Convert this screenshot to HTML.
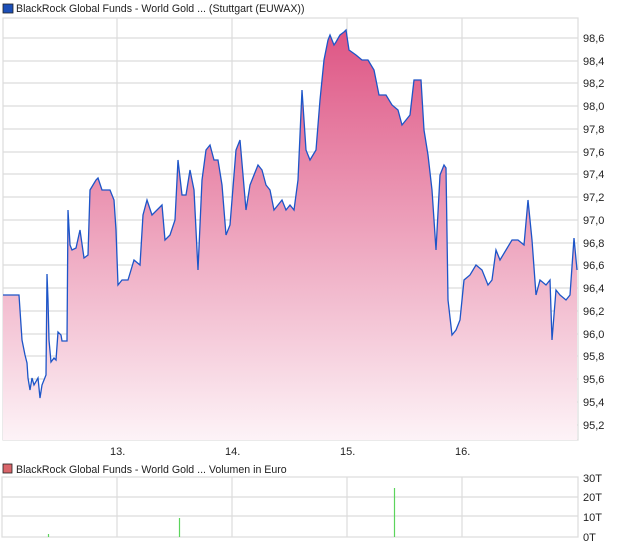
<!DOCTYPE html>
<html><head><meta charset="utf-8"><style>
html,body{margin:0;padding:0;background:#fff;}
body{width:620px;height:546px;overflow:hidden;font-family:"Liberation Sans",sans-serif;}
text{font-family:"Liberation Sans",sans-serif;font-size:11px;fill:#222;}
text.t{font-size:10.6px;}
</style></head><body>
<svg width="620" height="546" viewBox="0 0 620 546" xmlns="http://www.w3.org/2000/svg">
<defs>
<linearGradient id="g" x1="0" y1="30" x2="0" y2="440" gradientUnits="userSpaceOnUse">
<stop offset="0" stop-color="#de5584"/>
<stop offset="1" stop-color="#fdf3f7"/>
</linearGradient>
</defs>
<rect x="3" y="4" width="10" height="9" fill="#1c4fb8" stroke="#222" stroke-width="0.8"/>
<text class="t" x="16" y="12">BlackRock Global Funds - World Gold ... (Stuttgart (EUWAX))</text>
<g stroke="#dcdcdc" stroke-width="1.2" fill="none">
<rect x="3" y="18" width="575" height="422"/>
<line x1="117" y1="18" x2="117" y2="440"/><line x1="232" y1="18" x2="232" y2="440"/>
<line x1="347" y1="18" x2="347" y2="440"/><line x1="462" y1="18" x2="462" y2="440"/>
<line x1="3" y1="38" x2="578" y2="38"/><line x1="3" y1="61" x2="578" y2="61"/><line x1="3" y1="83" x2="578" y2="83"/><line x1="3" y1="106" x2="578" y2="106"/><line x1="3" y1="129" x2="578" y2="129"/><line x1="3" y1="152" x2="578" y2="152"/><line x1="3" y1="174" x2="578" y2="174"/><line x1="3" y1="197" x2="578" y2="197"/><line x1="3" y1="220" x2="578" y2="220"/><line x1="3" y1="243" x2="578" y2="243"/><line x1="3" y1="265" x2="578" y2="265"/><line x1="3" y1="288" x2="578" y2="288"/><line x1="3" y1="311" x2="578" y2="311"/><line x1="3" y1="334" x2="578" y2="334"/><line x1="3" y1="356" x2="578" y2="356"/><line x1="3" y1="379" x2="578" y2="379"/><line x1="3" y1="402" x2="578" y2="402"/><line x1="3" y1="425" x2="578" y2="425"/>
</g>
<polygon fill="url(#g)" points="3,440 3,295 19,295 20,310 22,340 25,355 27,363 28,378 30,390 32,378 34,385 38,378 40,398 42,385 44,380 46,375 47,274 48,300 49,340 51,362 54,358 56,360 58,332 61,335 62,341 67,341 68,210 70,245 72,250 76,248 80,230 84,258 88,255 90,190 93,185 96,180 98,178 102,190 110,190 114,200 116,230 118,285 122,280 128,280 134,260 140,265 143,215 147,200 152,215 157,210 162,205 165,240 170,235 175,220 178,160 182,195 186,195 190,170 194,190 198,270 202,180 206,150 210,145 214,160 218,160 222,185 226,235 230,225 236,150 240,140 246,210 250,185 254,175 258,165 262,170 266,185 270,190 274,210 278,205 282,200 286,210 290,205 294,210 298,180 302,90 306,150 310,160 316,150 320,100 324,60 328,40 330,35 334,45 336,42 340,35 344,32 346,30 349,50 356,55 362,60 368,60 374,70 379,95 386,95 392,105 398,110 402,125 410,115 414,80 421,80 424,130 428,155 432,190 436,250 440,175 444,165 446,168 448,300 452,335 456,330 460,320 464,280 470,275 476,265 482,270 488,285 492,280 496,250 500,260 506,250 512,240 518,240 524,245 528,200 532,240 536,295 540,280 546,285 550,280 552,340 556,290 560,295 566,300 570,295 574,238 577,270 577,440"/>
<polyline fill="none" stroke="#1d55c8" stroke-width="1.3" points="3,295 19,295 20,310 22,340 25,355 27,363 28,378 30,390 32,378 34,385 38,378 40,398 42,385 44,380 46,375 47,274 48,300 49,340 51,362 54,358 56,360 58,332 61,335 62,341 67,341 68,210 70,245 72,250 76,248 80,230 84,258 88,255 90,190 93,185 96,180 98,178 102,190 110,190 114,200 116,230 118,285 122,280 128,280 134,260 140,265 143,215 147,200 152,215 157,210 162,205 165,240 170,235 175,220 178,160 182,195 186,195 190,170 194,190 198,270 202,180 206,150 210,145 214,160 218,160 222,185 226,235 230,225 236,150 240,140 246,210 250,185 254,175 258,165 262,170 266,185 270,190 274,210 278,205 282,200 286,210 290,205 294,210 298,180 302,90 306,150 310,160 316,150 320,100 324,60 328,40 330,35 334,45 336,42 340,35 344,32 346,30 349,50 356,55 362,60 368,60 374,70 379,95 386,95 392,105 398,110 402,125 410,115 414,80 421,80 424,130 428,155 432,190 436,250 440,175 444,165 446,168 448,300 452,335 456,330 460,320 464,280 470,275 476,265 482,270 488,285 492,280 496,250 500,260 506,250 512,240 518,240 524,245 528,200 532,240 536,295 540,280 546,285 550,280 552,340 556,290 560,295 566,300 570,295 574,238 577,270"/>
<g>
<text x="583" y="42">98,6</text><text x="583" y="65">98,4</text><text x="583" y="87">98,2</text><text x="583" y="110">98,0</text><text x="583" y="133">97,8</text><text x="583" y="156">97,6</text><text x="583" y="178">97,4</text><text x="583" y="201">97,2</text><text x="583" y="224">97,0</text><text x="583" y="247">96,8</text><text x="583" y="269">96,6</text><text x="583" y="292">96,4</text><text x="583" y="315">96,2</text><text x="583" y="338">96,0</text><text x="583" y="360">95,8</text><text x="583" y="383">95,6</text><text x="583" y="406">95,4</text><text x="583" y="429">95,2</text>
<text x="110" y="455">13.</text><text x="225" y="455">14.</text><text x="340" y="455">15.</text><text x="455" y="455">16.</text>
</g>
<rect x="3" y="464" width="9" height="9" fill="#d9656a" stroke="#222" stroke-width="0.8"/>
<text class="t" x="16" y="473">BlackRock Global Funds - World Gold ... Volumen in Euro</text>
<g stroke="#dcdcdc" stroke-width="1.2" fill="none">
<rect x="2" y="477" width="576" height="60"/>
<line x1="117" y1="477" x2="117" y2="537"/><line x1="232" y1="477" x2="232" y2="537"/><line x1="347" y1="477" x2="347" y2="537"/><line x1="462" y1="477" x2="462" y2="537"/>
<line x1="2" y1="497" x2="578" y2="497"/><line x1="2" y1="516" x2="578" y2="516"/>
</g>
<g stroke="#5cd45c" stroke-width="1.2">
<line x1="48.5" y1="534" x2="48.5" y2="537"/><line x1="179.5" y1="518" x2="179.5" y2="537"/><line x1="394.5" y1="488" x2="394.5" y2="537"/>
</g>
<text x="583" y="482">30T</text><text x="583" y="501">20T</text><text x="583" y="521">10T</text><text x="583" y="541">0T</text>
</svg>
</body></html>
